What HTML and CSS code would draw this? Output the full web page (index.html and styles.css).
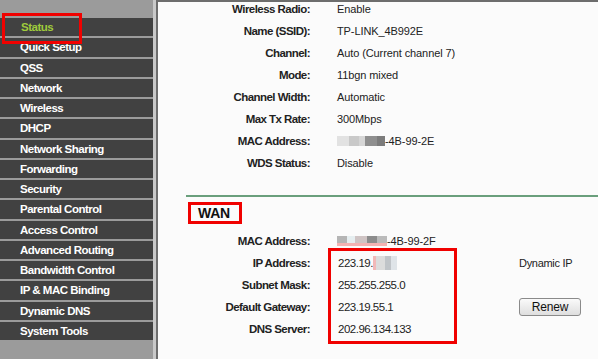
FILE: index.html
```html
<!DOCTYPE html>
<html>
    <head>
        <meta charset="UTF-8">
        <title>Status</title>
        <link rel="stylesheet" href="styles.css">
    </head>
    <body>
        <div class="page">
            <nav class="menu">
                <ul>
                    <li class="active">Status</li>
                    <li>Quick Setup</li>
                    <li>QSS</li>
                    <li>Network</li>
                    <li>Wireless</li>
                    <li>DHCP</li>
                    <li>Network Sharing</li>
                    <li>Forwarding</li>
                    <li>Security</li>
                    <li>Parental Control</li>
                    <li>Access Control</li>
                    <li>Advanced Routing</li>
                    <li>Bandwidth Control</li>
                    <li>IP &amp; MAC Binding</li>
                    <li>Dynamic DNS</li>
                    <li>System Tools</li>
                </ul>
            </nav>
            <div class="edge"></div>
            <div class="content">
                <div class="wireless">
                    <div class="row"><span class="label">Wireless Radio:</span><span class="value">Enable</span></div>
                    <div class="row"><span class="label">Name (SSID):</span><span class="value">TP-LINK_4B992E</span></div>
                    <div class="row"><span class="label">Channel:</span><span class="value">Auto (Current channel 7)</span></div>
                    <div class="row"><span class="label">Mode:</span><span class="value">11bgn mixed</span></div>
                    <div class="row"><span class="label">Channel Width:</span><span class="value">Automatic</span></div>
                    <div class="row"><span class="label">Max Tx Rate:</span><span class="value">300Mbps</span></div>
                    <div class="row"><span class="label">MAC Address:</span><span class="value"><span class="blur blur-a"></span>-4B-99-2E</span></div>
                    <div class="row"><span class="label">WDS Status:</span><span class="value">Disable</span></div>
                </div>
                <div class="divider"></div>
                <h2 class="section-title">WAN</h2>
                <div class="wan">
                    <div class="row"><span class="label">MAC Address:</span><span class="value"><span class="blur blur-b"></span>-4B-99-2F</span></div>
                    <div class="row"><span class="label">IP Address:</span><span class="value big">223.19.<span class="blur blur-c"></span></span><span class="extra">Dynamic IP</span></div>
                    <div class="row"><span class="label">Subnet Mask:</span><span class="value big">255.255.255.0</span></div>
                    <div class="row"><span class="label">Default Gateway:</span><span class="value big">223.19.55.1</span><span class="extra"><button class="renew">Renew</button></span></div>
                    <div class="row"><span class="label">DNS Server:</span><span class="value big">202.96.134.133</span></div>
                    <div class="mark"></div>
                </div>
            </div>
        </div>
    </body>
</html>
```

FILE: styles.css
```css
* { margin: 0; padding: 0; box-sizing: border-box; }
html, body { height: 100%; background: #fbfbfb; font-family: "Liberation Sans", Arial, sans-serif; }
.page { display: flex; height: 359px; overflow: hidden; }

.menu { width: 153px; flex: none; background: #9b9b9b; padding-top: 16px; }
.menu ul { list-style-type: none; }
.menu li { position: relative; height: 20.25px; border-top: 2px solid #9b9b9b; background: #414141; padding-left: 20px;
    color: #fff; font-size: 11.5px; font-weight: bold; letter-spacing: -0.5px; line-height: 18px; }
.menu li.active { color: #9fca3c; padding-left: 21px; z-index: 1; }
.menu li.active::after { content: ""; position: absolute; left: 2px; top: -5px; width: 74px; height: 25px; border: 3px solid #f00100; }

.edge { width: 5px; flex: none; border-left: 3px solid #c9c9c9; background: #6d6d6d; }

.content { flex: 1; border-top: 2px solid #6d6d6d; }
.row { display: grid; grid-template-columns: 152px 155px auto; column-gap: 27px; height: 22px; align-items: center; color: #222; }
.label { text-align: right; font-size: 11.5px; font-weight: bold; letter-spacing: -0.55px; }
.value { font-size: 11px; letter-spacing: -0.1px; white-space: nowrap; display: flex; align-items: center; }
.value.big { font-size: 11.5px; letter-spacing: -0.5px; padding-left: 1px; }
.extra { font-size: 11px; letter-spacing: -0.3px; }

.wireless { margin-top: -4px; }
.divider { margin: 21px 0 0 28px; height: 2px; background: #6a9f7c; }
.section-title { display: inline-block; margin: 5px 0 0 30px; border: 3px solid #f00100; padding: 0 9px 0 7px;
    font-size: 14px; line-height: 16px; color: #111; letter-spacing: -0.3px; }
.wan { position: relative; margin-top: 6px; }
.mark { position: absolute; left: 170px; top: 18px; width: 129px; height: 96px; border: 3px solid #f00100; }

.blur { display: inline-block; height: 10px; }
.blur-a { width: 48px; background: linear-gradient(90deg, #e2e2e2 0 12px, #c9c9c9 12px 22px, #d6d6d6 22px 28px, #8f8f8f 28px 40px, #7c7c7c 40px 48px); }
.blur-b { width: 50px; background: linear-gradient(180deg, transparent 0 7px, #f3b3b3 7px), linear-gradient(90deg, #b5b5b5 0 10px, #e6eef0 10px 18px, #cfc4c4 18px 30px, #8c8c8c 30px 40px, #bbb 40px 50px); }
.blur-c { width: 24px; height: 14px; background: linear-gradient(90deg, #f2b8b8 0 3px, #dcdcdc 3px 12px, #c0c4c8 12px 18px, #dfe4e8 18px 24px); }

.renew { width: 62px; height: 18px; border: 1px solid #8a8a8a; border-radius: 3px; background: linear-gradient(#fafafa, #dedede);
    font-family: "Liberation Sans", Arial, sans-serif; font-size: 12px; color: #111; letter-spacing: -0.2px; }
```
